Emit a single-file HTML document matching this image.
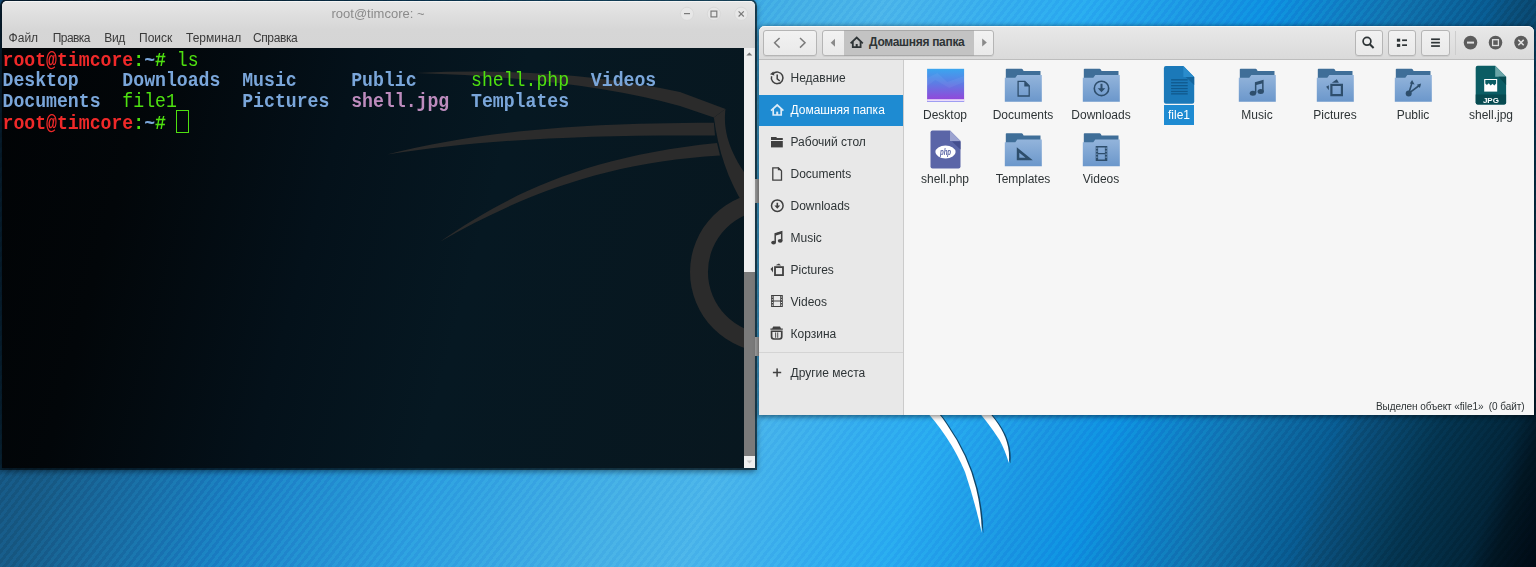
<!DOCTYPE html>
<html><head><meta charset="utf-8">
<style>
*{box-sizing:border-box;margin:0;padding:0}
html,body{width:1536px;height:567px;overflow:hidden;background:#0a3050}
body{position:relative;font-family:"Liberation Sans",sans-serif}
.abs{position:absolute}
#bg{position:absolute;left:0;top:0;width:1536px;height:567px;
background:linear-gradient(110deg,#124670 0%,#165a86 12.6%,#1a80c4 24%,#2c9ee0 35%,#46b0e6 46.5%,#4ab4ea 51%,#34acee 58%,#28aaf0 62.5%,#1a95e2 69%,#0e90e2 72.8%,#1070ac 80.6%,#085a90 85.5%,#0a4e7a 87%,#04344f 91.6%,#022438 96%,#011522 97.4%,#000a14 100%)}
#stripes{position:absolute;left:0;top:0;width:1536px;height:567px;mix-blend-mode:overlay;
background:repeating-linear-gradient(128deg,rgba(255,255,255,0.06) 0px,rgba(255,255,255,0.06) 3px,rgba(0,0,0,0.04) 3px,rgba(0,0,0,0.04) 6.1px)}
.menu{position:absolute;top:30.6px;font-size:12px;color:#3a3a3a;line-height:14px;white-space:pre}
.tl{position:absolute;left:0.5px;font-family:"Liberation Mono",monospace;font-size:18.17px;line-height:21px;white-space:pre;font-weight:bold;transform:scaleY(1.1);transform-origin:0 15.4px}
.r{color:#ef2929}.g{color:#4ee010}.b{color:#7aa6da}.p{color:#bd8bbd}.n{font-weight:normal}
.btn{position:absolute;border:1px solid #b5b5b5;border-radius:3px;background:linear-gradient(#f2f2f2,#e9e9e9);box-shadow:0 1px 0 rgba(0,0,0,0.06)}
.st{position:absolute;left:790.5px;font-size:12px;color:#2e3436;line-height:14px;white-space:pre}
.lbl{position:absolute;width:78px;text-align:center;font-size:12px;color:#2e3436;line-height:14px;white-space:pre}
</style></head>
<body>
<div id="bg"></div>
<div id="stripes"></div>
<svg class="abs" style="left:0;top:0" width="1536" height="567">
 <g transform="translate(1.6 0.6)" fill="#0b2a40" opacity="0.75">
  <path d="M920.5 405 L929.5 405 Q939 412 946.5 424 Q968 455 976 488 Q981.5 510 981.8 533 Q975 502 965 472 Q950 436 920.5 405Z"/>
  <path d="M972.6 405 L982.2 405 Q1002 425 1006.8 442 Q1010 452 1008.8 463 Q1005 450 999.5 440 Q988 422 972.6 405Z"/>
 </g>
 <g fill="#ffffff">
  <path d="M920.5 405 L929.5 405 Q939 412 946.5 424 Q968 455 976 488 Q981.5 510 981.8 533 Q975 502 965 472 Q950 436 920.5 405Z"/>
  <path d="M972.6 405 L982.2 405 Q1002 425 1006.8 442 Q1010 452 1008.8 463 Q1005 450 999.5 440 Q988 422 972.6 405Z"/>
 </g>
</svg>
<!-- TERMINAL -->
<div class="abs" style="left:2px;top:1px;width:753px;height:467px;border-radius:5px 5px 0 0;background:#d6d6d6;box-shadow:0 0 0 2px rgba(0,0,0,.55),0 2px 6px 1px rgba(0,0,0,.5)"></div>
<div class="abs" style="left:2px;top:1px;width:753px;height:47px;border-radius:5px 5px 0 0;background:linear-gradient(#e6e6e6,#d6d6d6 28px,#d5d5d5);border-top:1px solid #f5f5f5"></div>
<div class="abs" style="left:331.5px;top:7.45px;font-size:13px;color:#8b8b8b;line-height:14px;white-space:pre">root@timcore: ~</div>
<svg class="abs" style="left:0;top:0" width="760" height="30">
 <g fill="#e7e7e7" stroke="#d9d9d9" stroke-width="1"><circle cx="687" cy="13.8" r="6.6"/><circle cx="713.9" cy="13.8" r="6.6"/><circle cx="741.2" cy="13.8" r="6.6"/></g>
 <g stroke="#7a7a7a" fill="none" stroke-width="1.2"><path d="M684 13.6H690"/><rect x="711" y="11.1" width="5.8" height="5.8"/><path d="M738.6 11.3L743.8 16.5M743.8 11.3L738.6 16.5"/></g>
</svg>
<div class="menu" style="left:8.6px">Файл</div>
<div class="menu" style="left:52.7px;letter-spacing:-0.55px">Правка</div>
<div class="menu" style="left:104.3px;letter-spacing:-0.4px">Вид</div>
<div class="menu" style="left:139px">Поиск</div>
<div class="menu" style="left:186px">Терминал</div>
<div class="menu" style="left:253px;letter-spacing:-0.4px">Справка</div>
<div class="abs" style="left:2px;top:48px;width:742px;height:420px;background:linear-gradient(105deg,#010305 0%,#020609 18%,#04111a 42%,#061822 62%,#08171f 100%);overflow:hidden">
 <svg class="abs" style="left:-2px;top:-48px" width="760" height="470">
  <g fill="#2b2b2b">
   <path d="M416 73 Q560 66 680 92 L725.5 109 L713.9 117.5 L680 106 Q580 78 416 73Z"/>
   <path d="M387 154.5 C470 134 560 123 713.9 122.8 L715 135.5 C580 134.5 480 140 387 154.5Z"/>
   <path d="M440 241.7 C505 196 585 156 717 143 L720 155.6 C610 162 525 193 440 241.7Z"/>
   <path d="M713.9 117.5 L725.5 109 C723.5 125 726 145 744 172 L744 205 C728 180 718 150 713.9 117.5Z"/>
   <path d="M770 192 A80 80 0 1 0 770 352 L770 334 A62 62 0 1 1 770 210Z"/>
  </g>
 </svg>
 <div class="tl" style="top:2.5px"><span class="r">root@timcore</span><span class="g">:</span><span class="b">~</span><span class="g"># </span><span class="g n">ls</span></div>
 <div class="tl b" style="top:23.2px">Desktop    Downloads  Music     Public     <span class="g n">shell.php</span>  Videos</div>
 <div class="tl b" style="top:44.2px">Documents  <span class="g n">file1</span>      Pictures  <span class="p">shell.jpg</span>  Templates</div>
 <div class="tl" style="top:65.7px"><span class="r">root@timcore</span><span class="g">:</span><span class="b">~</span><span class="g"># </span></div>
 <div class="abs" style="left:174px;top:62px;width:13.2px;height:22.6px;border:1px solid #4ee010"></div>
</div>
<div class="abs" style="left:744px;top:48px;width:11px;height:420px;background:#efefef"></div>
<div class="abs" style="left:744px;top:272px;width:11px;height:184px;background:#7a7a7a"></div>

<div class="abs" style="left:755px;top:179px;width:4px;height:24px;background:#9b9b9b"></div>
<div class="abs" style="left:755px;top:337px;width:4px;height:19px;background:#a0a0a0"></div>
<div class="abs" style="left:759px;top:26px;width:775px;height:389px;border-radius:6px 6px 0 0;background:#f6f6f6;box-shadow:0 1px 5px 1px rgba(0,0,0,.45)"></div>
<!-- FILE MANAGER -->
<div id="fm"></div>
<div class="abs" style="left:759px;top:26px;width:775px;height:34px;background:linear-gradient(#e8e8e8,#dadada);border-top-left-radius:6px;border-top-right-radius:6px;border-top:1px solid #f7f7f7;border-bottom:1px solid #bdbdbd"></div>
<!-- nav group -->
<div class="btn" style="left:763px;top:30px;width:54px;height:26px"></div>
<div class="btn" style="left:822px;top:30px;width:172px;height:26px"></div>
<div class="abs" style="left:844px;top:30px;width:130px;height:26px;background:#c3c3c3;border-top:1px solid #a9a9a9;border-bottom:1px solid #a9a9a9"></div>
<div class="btn" style="left:1355px;top:30px;width:28px;height:26px"></div>
<div class="btn" style="left:1388px;top:30px;width:28px;height:26px"></div>
<div class="btn" style="left:1421px;top:30px;width:29px;height:26px"></div>
<div class="abs" style="left:1455px;top:31px;width:1px;height:24px;background:#cdcdcd"></div>
<div class="abs" style="left:869px;top:35px;font-size:12px;font-weight:bold;letter-spacing:-0.3px;color:#2e3436;line-height:14px">Домашняя папка</div>
<!-- sidebar -->
<div class="abs" style="left:759px;top:60px;width:144px;height:355px;background:#e8e8e8"></div>
<div class="abs" style="left:903px;top:60px;width:1px;height:355px;background:#cbcbcb"></div>
<div class="abs" style="left:759px;top:95px;width:144px;height:31px;background:#1e8bd2"></div>
<div class="abs" style="left:759px;top:352px;width:144px;height:1px;background:#d4d4d4"></div>
<div class="st" style="top:71px">Недавние</div>
<div class="st" style="top:103px;color:#fff">Домашняя папка</div>
<div class="st" style="top:135px">Рабочий стол</div>
<div class="st" style="top:167px">Documents</div>
<div class="st" style="top:199px">Downloads</div>
<div class="st" style="top:231px">Music</div>
<div class="st" style="top:263px">Pictures</div>
<div class="st" style="top:295px">Videos</div>
<div class="st" style="top:327px">Корзина</div>
<div class="st" style="top:366px">Другие места</div>
<!-- labels -->
<div class="lbl" style="left:906px;top:108px">Desktop</div>
<div class="lbl" style="left:984px;top:108px">Documents</div>
<div class="lbl" style="left:1062px;top:108px">Downloads</div>
<div class="abs" style="left:1164px;top:105px;width:30px;height:20px;background:#1e8bd2"></div>
<div class="lbl" style="left:1140px;top:108px;color:#fff">file1</div>
<div class="lbl" style="left:1218px;top:108px">Music</div>
<div class="lbl" style="left:1296px;top:108px">Pictures</div>
<div class="lbl" style="left:1374px;top:108px">Public</div>
<div class="lbl" style="left:1452px;top:108px">shell.jpg</div>
<div class="lbl" style="left:906px;top:172px">shell.php</div>
<div class="lbl" style="left:984px;top:172px">Templates</div>
<div class="lbl" style="left:1062px;top:172px">Videos</div>
<div class="abs" style="left:1376px;top:401.2px;font-size:10px;letter-spacing:-0.06px;color:#2e3436;line-height:12px;white-space:pre">Выделен объект «file1»  (0 байт)</div>
<svg class="abs" style="left:0;top:0" width="1536" height="567">
 <defs>
  <linearGradient id="fg" x1="0" y1="0" x2="0" y2="1"><stop offset="0" stop-color="#93b4db"/><stop offset="1" stop-color="#6b97cb"/></linearGradient>
  <linearGradient id="dg" x1="0" y1="0" x2="0" y2="1"><stop offset="0" stop-color="#3aa6ef"/><stop offset="0.45" stop-color="#5f7be4"/><stop offset="1" stop-color="#9a3fd8"/></linearGradient>
  <g id="folder">
   <path d="M6.5 41V9.6Q6.5 8.8 7.3 8.8H22.3Q23 8.8 23.5 9.6L24.3 11H41.2V41Z" fill="#3f6e98"/>
   <path d="M5.5 41.8V17.7H16L18 15.1H42.5V41.8Z" fill="url(#fg)"/>
  </g>
 </defs>
 <!-- scrollbar arrows -->
 <path d="M746.4 55.6L749.4 52.4L752.4 55.6Z" fill="#777"/>
 <path d="M746.6 460.6L749.4 463.4L752.2 460.6Z" fill="#cacaca"/>
 <!-- header icons -->
 <g fill="none" stroke="#7b7b7b" stroke-width="1.5"><path d="M779.6 38L774.6 42.8L779.6 47.6"/><path d="M800 38L805 42.8L800 47.6"/></g>
 <path d="M835 38.7L830.7 42.75L835 46.8Z" fill="#8a8a8a"/>
 <path d="M982.2 38.6L986.8 42.5L982.2 46.4Z" fill="#8a8a8a"/>
 <g fill="none" stroke="#2e3436" stroke-width="1.8"><path d="M850.6 43.3L856.7 37.6L862.8 43.3"/><path d="M852.8 41.4V47.2H860.6V41.4"/><path d="M856.7 47.2V44" stroke-width="2"/></g>
 <g fill="none" stroke="#2e3436"><circle cx="1367" cy="41.3" r="3.9" stroke-width="1.7"/><path d="M1369.6 44L1373.6 48" stroke-width="2"/></g>
 <g fill="#2e3436"><rect x="1396.9" y="38.7" width="3.3" height="3"/><rect x="1396.9" y="43.9" width="3.3" height="3"/><rect x="1402.1" y="39.4" width="4.9" height="1.7"/><rect x="1402.1" y="44.3" width="4.9" height="1.7"/>
  <rect x="1431.1" y="38.4" width="8.8" height="1.7"/><rect x="1431.1" y="41.8" width="8.8" height="1.7"/><rect x="1431.1" y="45.2" width="8.8" height="1.7"/></g>
 <g fill="#5c5c5c"><circle cx="1470.5" cy="42.6" r="6.8"/><circle cx="1495.5" cy="42.6" r="6.8"/><circle cx="1521" cy="42.6" r="6.8"/></g>
 <g stroke="#e0e0e0" fill="none"><path d="M1467 42.6H1474" stroke-width="2"/><rect x="1492.6" y="39.7" width="5.8" height="5.8" stroke-width="1.3"/><path d="M1518.3 39.9L1523.7 45.3M1523.7 39.9L1518.3 45.3" stroke-width="1.5"/></g>
 <!-- sidebar icons -->
 <g fill="none" stroke="#404040" stroke-width="1.5">
  <path d="M771.6 76.2A5.8 5.8 0 1 0 773 73.8"/><path d="M777.2 74.6V78.8L779.8 81"/>
  <path d="M772.8 167.9H778.5L781.5 170.9V180.2H772.8Z" stroke-width="1.3"/>
  <circle cx="777.3" cy="205.7" r="5.8"/>
  <path d="M775.2 242.5V233.8L781.7 231.8V240.7"/>
  <rect x="775" y="267.1" width="8" height="8" stroke-width="1.8"/>
   </g>
 <path d="M770 74.3L773.4 71.4L774.4 75.6Z" fill="#404040"/>
 <g fill="#404040">
  <path d="M771 137.1H776.2L777 138.1H782.8V139.9H771Z"/><rect x="771" y="141" width="11.8" height="6.4"/>
  <path d="M777.8 170.2H781.9L777.8 166.9Z"/>
  <path d="M776.5 202.8H778.1V205.6H780.2L777.3 208.8L774.4 205.6H776.5Z"/>
  <ellipse cx="773.6" cy="242.6" rx="2.4" ry="1.9"/><ellipse cx="780.2" cy="240.8" rx="2.4" ry="1.9"/><path d="M775.2 233.4L781.7 231.4V233.8L775.2 235.8Z"/>
  <path d="M770.5 268.9L773 266.6V272.4Z"/><path d="M775.5 265.2L779 263.6L781 265.6Z"/>
  <path d="M771.1 294.9H782.8V307H771.1ZM773.7 296V300.6H780.2V296ZM773.7 301.6V305.9H780.2V301.6ZM771.9 296.4V297.5H772.9V296.4ZM771.9 299.2V300.3H772.9V299.2ZM771.9 302V303.1H772.9V302ZM771.9 304.6V305.7H772.9V304.6ZM781 296.4V297.5H782V296.4ZM781 299.2V300.3H782V299.2ZM781 302V303.1H782V302ZM781 304.6V305.7H782V304.6Z" fill-rule="evenodd"/>
  <path d="M773.2 326.4H780L781 328.4H782.8V329.7H770.4V328.4H772.2Z"/>
  <path d="M770.7 330.6H782.6V336.5Q782.6 339.7 779.5 339.7H773.8Q770.7 339.7 770.7 336.5ZM772.4 332V336.4Q772.4 338.2 774 338.2H779.3Q780.9 338.2 780.9 336.4V332Z" fill-rule="evenodd"/>
  <rect x="775.2" y="332.4" width="0.9" height="5.4"/><rect x="777.3" y="332.4" width="0.9" height="5.4"/>
  <rect x="772.9" y="371.75" width="8.3" height="1.5"/><rect x="776.35" y="368.4" width="1.5" height="8.3"/>
 </g>
 <g fill="none" stroke="#dcecf8" stroke-width="1.7"><path d="M771 110.6L777.2 105L783.4 110.6"/><path d="M773.2 108.8V115H781.2V108.8"/><path d="M777.2 115V111.6" stroke-width="2"/></g>
</svg>
<svg class="abs" style="left:0;top:0" width="1536" height="567">
 <!-- Desktop -->
 <g transform="translate(921.3 60)">
  <rect x="5.8" y="8.8" width="37" height="33.2" fill="url(#dg)"/>
  <path d="M5.8 18L16 13L26 22L42.8 16V22L28 28L14 20L5.8 26Z" fill="#ffffff" opacity="0.05"/>
  <rect x="5.8" y="39.2" width="37" height="1.9" fill="#ecdcfa"/>
  <rect x="5.8" y="41.1" width="37" height="0.9" fill="#a0a8f4"/>
 </g>
 <!-- Documents -->
 <g transform="translate(999.3 60)"><use href="#folder"/>
  <path d="M18.8 21.3H25.5L29.9 25.7V36H18.8Z" fill="none" stroke="#2e4e6c" stroke-width="1.3"/><path d="M25 21L30.4 26.4H25Z" fill="#2e4e6c"/></g>
 <!-- Downloads -->
 <g transform="translate(1077.3 60)"><use href="#folder"/>
  <circle cx="24.2" cy="28.4" r="7.2" fill="none" stroke="#2e4e6c" stroke-width="1.6"/>
  <path d="M23.2 23.8H25.2V28.2H28L24.2 32.2L20.4 28.2H23.2Z" fill="#2e4e6c"/></g>
 <!-- file1 -->
 <g transform="translate(1155.3 60)">
  <path d="M10.6 6.1H28.1L38.9 17.1V41.7Q38.9 43.7 36.9 43.7H10.6Q8.6 43.7 8.6 41.7V8.1Q8.6 6.1 10.6 6.1Z" fill="#1b79b9"/>
  <path d="M28.1 6.1L38.9 17.1H28.1Z" fill="#2a8ccc"/>
  <path d="M30.4 17.1H38.9V25Z" fill="#13659d"/>
  <g fill="#10598d"><rect x="15.8" y="19.2" width="16.6" height="1.3"/><rect x="15.8" y="22.1" width="16.6" height="1.3"/><rect x="15.8" y="25" width="16.6" height="1.3"/><rect x="15.8" y="27.9" width="16.6" height="1.3"/><rect x="15.8" y="30.8" width="16.6" height="1.3"/><rect x="15.8" y="33.2" width="16.6" height="1.3"/></g>
 </g>
 <!-- Music -->
 <g transform="translate(1233.3 60)"><use href="#folder"/>
  <g fill="#2e4e6c"><ellipse cx="19.6" cy="33.2" rx="3.2" ry="2.5"/><ellipse cx="27.4" cy="31.4" rx="3.2" ry="2.5"/>
  <path d="M21.6 33V22.2L30.3 19.8V31.2H28.8V23.4L23.1 25V33Z"/></g></g>
 <!-- Pictures -->
 <g transform="translate(1311.3 60)"><use href="#folder"/>
  <g fill="#2e4e6c"><path d="M19 23.8H31.7V36.2H19ZM21.2 26V34H29.5V26Z" fill-rule="evenodd"/>
  <path d="M20.5 22.8L25.5 19.2L27.6 22.8Z"/><path d="M17.6 25.2V30.2L14.8 26.8Z"/></g></g>
 <!-- Public -->
 <g transform="translate(1389.3 60)"><use href="#folder"/>
  <g fill="#2e4e6c"><circle cx="19.4" cy="33.4" r="3"/>
  <path d="M19.4 33.4L22.8 22.5M19.4 33.4L30.6 25" stroke="#2e4e6c" stroke-width="1.6"/>
  <path d="M22.8 20L25.3 24.4L20.5 23.6Z"/><path d="M31.8 23.6L30.6 28L27.6 24.8Z"/></g></g>
 <!-- shell.jpg -->
 <g transform="translate(1467.3 60)">
  <path d="M10.4 5.65H27.9L38.8 16.8V42.6Q38.8 44.6 36.8 44.6H10.4Q8.4 44.6 8.4 42.6V7.65Q8.4 5.65 10.4 5.65Z" fill="#0b5d64"/>
  <path d="M27.9 5.65L38.8 16.8H27.9Z" fill="#6aa5a8"/>
  <path d="M31.2 16.8H38.8V25Z" fill="#064a50"/>
  <path d="M8.4 34.4H38.8V42.6Q38.8 44.6 36.8 44.6H10.4Q8.4 44.6 8.4 42.6Z" fill="#074a50"/>
  <rect x="16.9" y="19" width="13" height="12.6" fill="#ffffff"/>
  <path d="M18 20.1H28.8V23.6L27 25.6L25.2 23.8L23.4 25.4L21.4 23.2L19.6 25L18 23.4Z" fill="#0b5d64"/>
  <text x="23.6" y="42.6" font-family="Liberation Sans" font-weight="bold" font-size="8" fill="#ffffff" text-anchor="middle">JPG</text>
 </g>
 <!-- shell.php -->
 <g transform="translate(921.3 124.5)">
  <path d="M11.2 6H28.7L39.2 16.6V42.1Q39.2 44.1 37.2 44.1H11.2Q9.2 44.1 9.2 42.1V8Q9.2 6 11.2 6Z" fill="#5a65a7"/>
  <path d="M28.7 6L39.2 16.6H28.7Z" fill="#9ca3d0"/>
  <path d="M30.7 17.1H39.2V25Z" fill="#444e8e"/>
  <ellipse cx="24.2" cy="27.5" rx="10.1" ry="6.4" fill="#ffffff"/>
  <text x="18.6" y="30.4" font-family="Liberation Sans" font-weight="bold" font-style="italic" font-size="8.4" fill="#5a65a7" textLength="11.2" lengthAdjust="spacingAndGlyphs">php</text>
 </g>
 <!-- Templates -->
 <g transform="translate(999.3 124.5)"><use href="#folder"/>
  <path d="M17.5 22.7L33.5 35.7H17.5ZM20 28.2V33.3H26.2Z" fill="#2e4e6c" fill-rule="evenodd"/></g>
 <!-- Videos -->
 <g transform="translate(1077.3 124.5)"><use href="#folder"/>
  <path d="M18.4 21.5H30V36.5H18.4ZM20.8 23V28.4H27.6V23ZM20.8 29.8V35H27.6V29.8Z" fill="#2e4e6c" fill-rule="evenodd"/>
  <g fill="#8cb0da"><rect x="19.1" y="23" width="1" height="1.4"/><rect x="19.1" y="26" width="1" height="1.4"/><rect x="19.1" y="29" width="1" height="1.4"/><rect x="19.1" y="32" width="1" height="1.4"/><rect x="28.3" y="23" width="1" height="1.4"/><rect x="28.3" y="26" width="1" height="1.4"/><rect x="28.3" y="29" width="1" height="1.4"/><rect x="28.3" y="32" width="1" height="1.4"/></g></g>
 <!-- claws handled elsewhere -->
</svg>
</body></html>
